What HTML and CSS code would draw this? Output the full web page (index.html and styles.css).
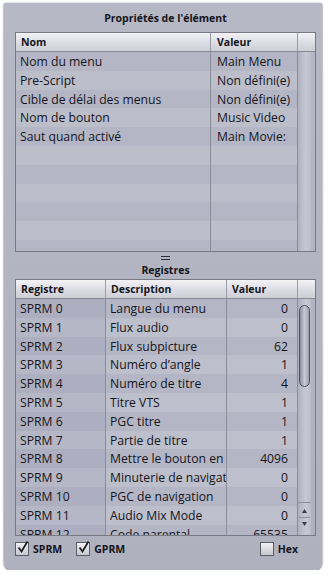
FILE: index.html
```html
<!DOCTYPE html>
<html>
<head>
    <title>Propriétés de l'élément</title>
    <link rel="stylesheet" href="styles.css">
</head>
<body>
    <div class="panel">

        <div class="title">Propriétés de l'élément</div>

        <div class="tbl tbl-props">
            <div class="head">
                <div class="hc">Nom</div>
                <div class="hc">Valeur</div>
                <div class="hc corner"></div>
            </div>
            <div class="body">
                <div class="rows">
                    <div class="row"><div class="c">Nom du menu</div><div class="c">Main Menu</div></div>
                    <div class="row"><div class="c">Pre-Script</div><div class="c">Non défini(e)</div></div>
                    <div class="row"><div class="c">Cible de délai des menus</div><div class="c">Non défini(e)</div></div>
                    <div class="row"><div class="c">Nom de bouton</div><div class="c">Music Video</div></div>
                    <div class="row"><div class="c">Saut quand activé</div><div class="c">Main Movie:</div></div>
                    <div class="row"><div class="c"></div><div class="c"></div></div>
                    <div class="row"><div class="c"></div><div class="c"></div></div>
                    <div class="row"><div class="c"></div><div class="c"></div></div>
                    <div class="row"><div class="c"></div><div class="c"></div></div>
                    <div class="row"><div class="c"></div><div class="c"></div></div>
                    <div class="row"><div class="c"></div><div class="c"></div></div>
                </div>
                <div class="track"></div>
            </div>
        </div>

        <div class="splitter">
            <div class="grip"></div>
            <div class="subtitle">Registres</div>
        </div>

        <div class="tbl tbl-regs">
            <div class="head">
                <div class="hc">Registre</div>
                <div class="hc">Description</div>
                <div class="hc">Valeur</div>
                <div class="hc corner"></div>
            </div>
            <div class="body">
                <div class="rows">
                    <div class="row"><div class="c key">SPRM 0</div><div class="c">Langue du menu</div><div class="c num">0</div></div>
                    <div class="row"><div class="c key">SPRM 1</div><div class="c">Flux audio</div><div class="c num">0</div></div>
                    <div class="row"><div class="c key">SPRM 2</div><div class="c">Flux subpicture</div><div class="c num">62</div></div>
                    <div class="row"><div class="c key">SPRM 3</div><div class="c">Numéro d’angle</div><div class="c num">1</div></div>
                    <div class="row"><div class="c key">SPRM 4</div><div class="c">Numéro de titre</div><div class="c num">4</div></div>
                    <div class="row"><div class="c key">SPRM 5</div><div class="c">Titre VTS</div><div class="c num">1</div></div>
                    <div class="row"><div class="c key">SPRM 6</div><div class="c">PGC titre</div><div class="c num">1</div></div>
                    <div class="row"><div class="c key">SPRM 7</div><div class="c">Partie de titre</div><div class="c num">1</div></div>
                    <div class="row"><div class="c key">SPRM 8</div><div class="c">Mettre le bouton en surbrillance</div><div class="c num">4096</div></div>
                    <div class="row"><div class="c key">SPRM 9</div><div class="c">Minuterie de navigation</div><div class="c num">0</div></div>
                    <div class="row"><div class="c key">SPRM 10</div><div class="c">PGC de navigation</div><div class="c num">0</div></div>
                    <div class="row"><div class="c key">SPRM 11</div><div class="c">Audio Mix Mode</div><div class="c num">0</div></div>
                    <div class="row"><div class="c key">SPRM 12</div><div class="c">Code parental</div><div class="c num">65535</div></div>
                </div>
                <div class="track">
                    <div class="thumb"></div>
                    <div class="arrows">
                        <svg width="13" height="28" viewBox="0 0 13 28">
                            <polygon points="6.5,6 4,10 9,10" fill="#3a3c48"/>
                            <line x1="1" y1="14.5" x2="12" y2="14.5" stroke="#8c8e9a"/>
                            <polygon points="6.5,23 4,19 9,19" fill="#3a3c48"/>
                        </svg>
                    </div>
                </div>
            </div>
        </div>

        <div class="footer">
            <label class="check"><span class="box on"><svg width="13" height="13" viewBox="0 0 13 13"><path d="M2.5 6.5 L5.5 10.5 L11.5 0.5" fill="none" stroke="#1d1d25" stroke-width="1.8"/></svg></span>SPRM</label>
            <label class="check"><span class="box on"><svg width="13" height="13" viewBox="0 0 13 13"><path d="M2.5 6.5 L5.5 10.5 L11.5 0.5" fill="none" stroke="#1d1d25" stroke-width="1.8"/></svg></span>GPRM</label>
            <label class="check hex"><span class="box"></span>Hex</label>
        </div>

    </div>
</body>
</html>
```

FILE: styles.css
```css
body {
    margin: 0;
    background: #ffffff;
    font-family: "Open Sans", "DejaVu Sans", sans-serif;
    color: #15151b;
}

.panel {
    margin: 3px 6px 0 4px;
    height: 567px;
    background: linear-gradient(#b6b8c5, #afb1bf);
    border-radius: 1px 1px 8px 8px;
    box-shadow: 0 1px 2px rgba(0, 0, 0, 0.6), 0 0 2px rgba(0, 0, 0, 0.25);
    display: flex;
    flex-direction: column;
    padding: 0 6px 0 11px;
}

.title {
    height: 29px;
    line-height: 30px;
    text-align: center;
    font-size: 10.5px;
    font-weight: bold;
}

.tbl {
    border: 1px solid #777985;
    overflow: hidden;
    display: flex;
    flex-direction: column;
}

.tbl-props {
    height: 219px;
}

.tbl-regs {
    height: 256px;
}

.head {
    display: grid;
    height: 18px;
    background: linear-gradient(#f2f2f5, #dadbe2 60%, #cdced6);
    border-bottom: 1px solid #888a95;
    flex-shrink: 0;
}

.tbl-props .row {
    grid-template-columns: 195px 87px;
}

.tbl-props .head {
    grid-template-columns: 195px 87px 13px;
}

.tbl-regs .row {
    grid-template-columns: 90px 121px 71px;
}

.tbl-regs .head {
    grid-template-columns: 90px 121px 71px 13px;
}

.hc {
    font-size: 10.5px;
    font-weight: bold;
    line-height: 18px;
    padding-left: 5px;
    border-right: 1px solid #9a9ca7;
}

.tbl-props .hc:nth-child(2) {
    padding-left: 6px;
}

.hc.corner {
    border-right: none;
}

.body {
    flex: 1;
    display: flex;
    overflow: hidden;
}

.rows {
    width: 282px;
}

.row {
    display: grid;
    height: 18.8px;
    background: #bcbeca;
}

.row:nth-child(odd) {
    background: #b4b6c5;
}

.tbl-regs .row:nth-child(even) {
    background: #bdbfcc;
}

.c {
    font-size: 12.2px;
    line-height: 19px;
    padding-left: 4px;
    white-space: nowrap;
    overflow: hidden;
    text-overflow: clip;
    border-right: 1px solid #8a8c98;
}

.tbl-props .c:nth-child(2) {
    padding-left: 6px;
}

.c.key {
    background: rgba(80, 85, 125, 0.07);
}

.c.num {
    text-align: right;
    padding-right: 9px;
}

.track {
    width: 13px;
    background: linear-gradient(90deg, #afb1be, #c6c8d3 60%, #bbbdc9);
    position: relative;
}

.thumb {
    position: absolute;
    left: 1px;
    top: 6px;
    width: 9px;
    height: 80px;
    border: 1px solid #4c4f5f;
    border-radius: 6px;
    background: linear-gradient(90deg, #8b8ea1, #c8cad7 50%, #9c9fb1);
}

.arrows {
    position: absolute;
    left: 0;
    bottom: 4px;
    height: 28px;
    border-top: 1px solid #8a8c98;
}

.arrows svg {
    display: block;
}

.splitter {
    height: 27px;
    display: flex;
    flex-direction: column;
    align-items: center;
}

.grip {
    margin-top: 4px;
    width: 9px;
    height: 2px;
    border-top: 1px solid #2e2f36;
    border-bottom: 1px solid #2e2f36;
}

.subtitle {
    margin-top: 3px;
    font-size: 10.5px;
    font-weight: bold;
}

.footer {
    display: flex;
    align-items: flex-start;
    height: 34px;
    padding-top: 6px;
    box-sizing: border-box;
}

.check {
    display: flex;
    align-items: center;
    font-size: 10.5px;
    font-weight: bold;
    margin-right: 14px;
}

.check.hex {
    margin-left: auto;
    margin-right: 18px;
}

.box {
    width: 12px;
    height: 12px;
    border: 1px solid #5a5c66;
    background: linear-gradient(#f2f2f5, #c6c7cf);
    margin-right: 4px;
    position: relative;
}

.box svg {
    position: absolute;
    left: 0;
    top: -2px;
}
```
